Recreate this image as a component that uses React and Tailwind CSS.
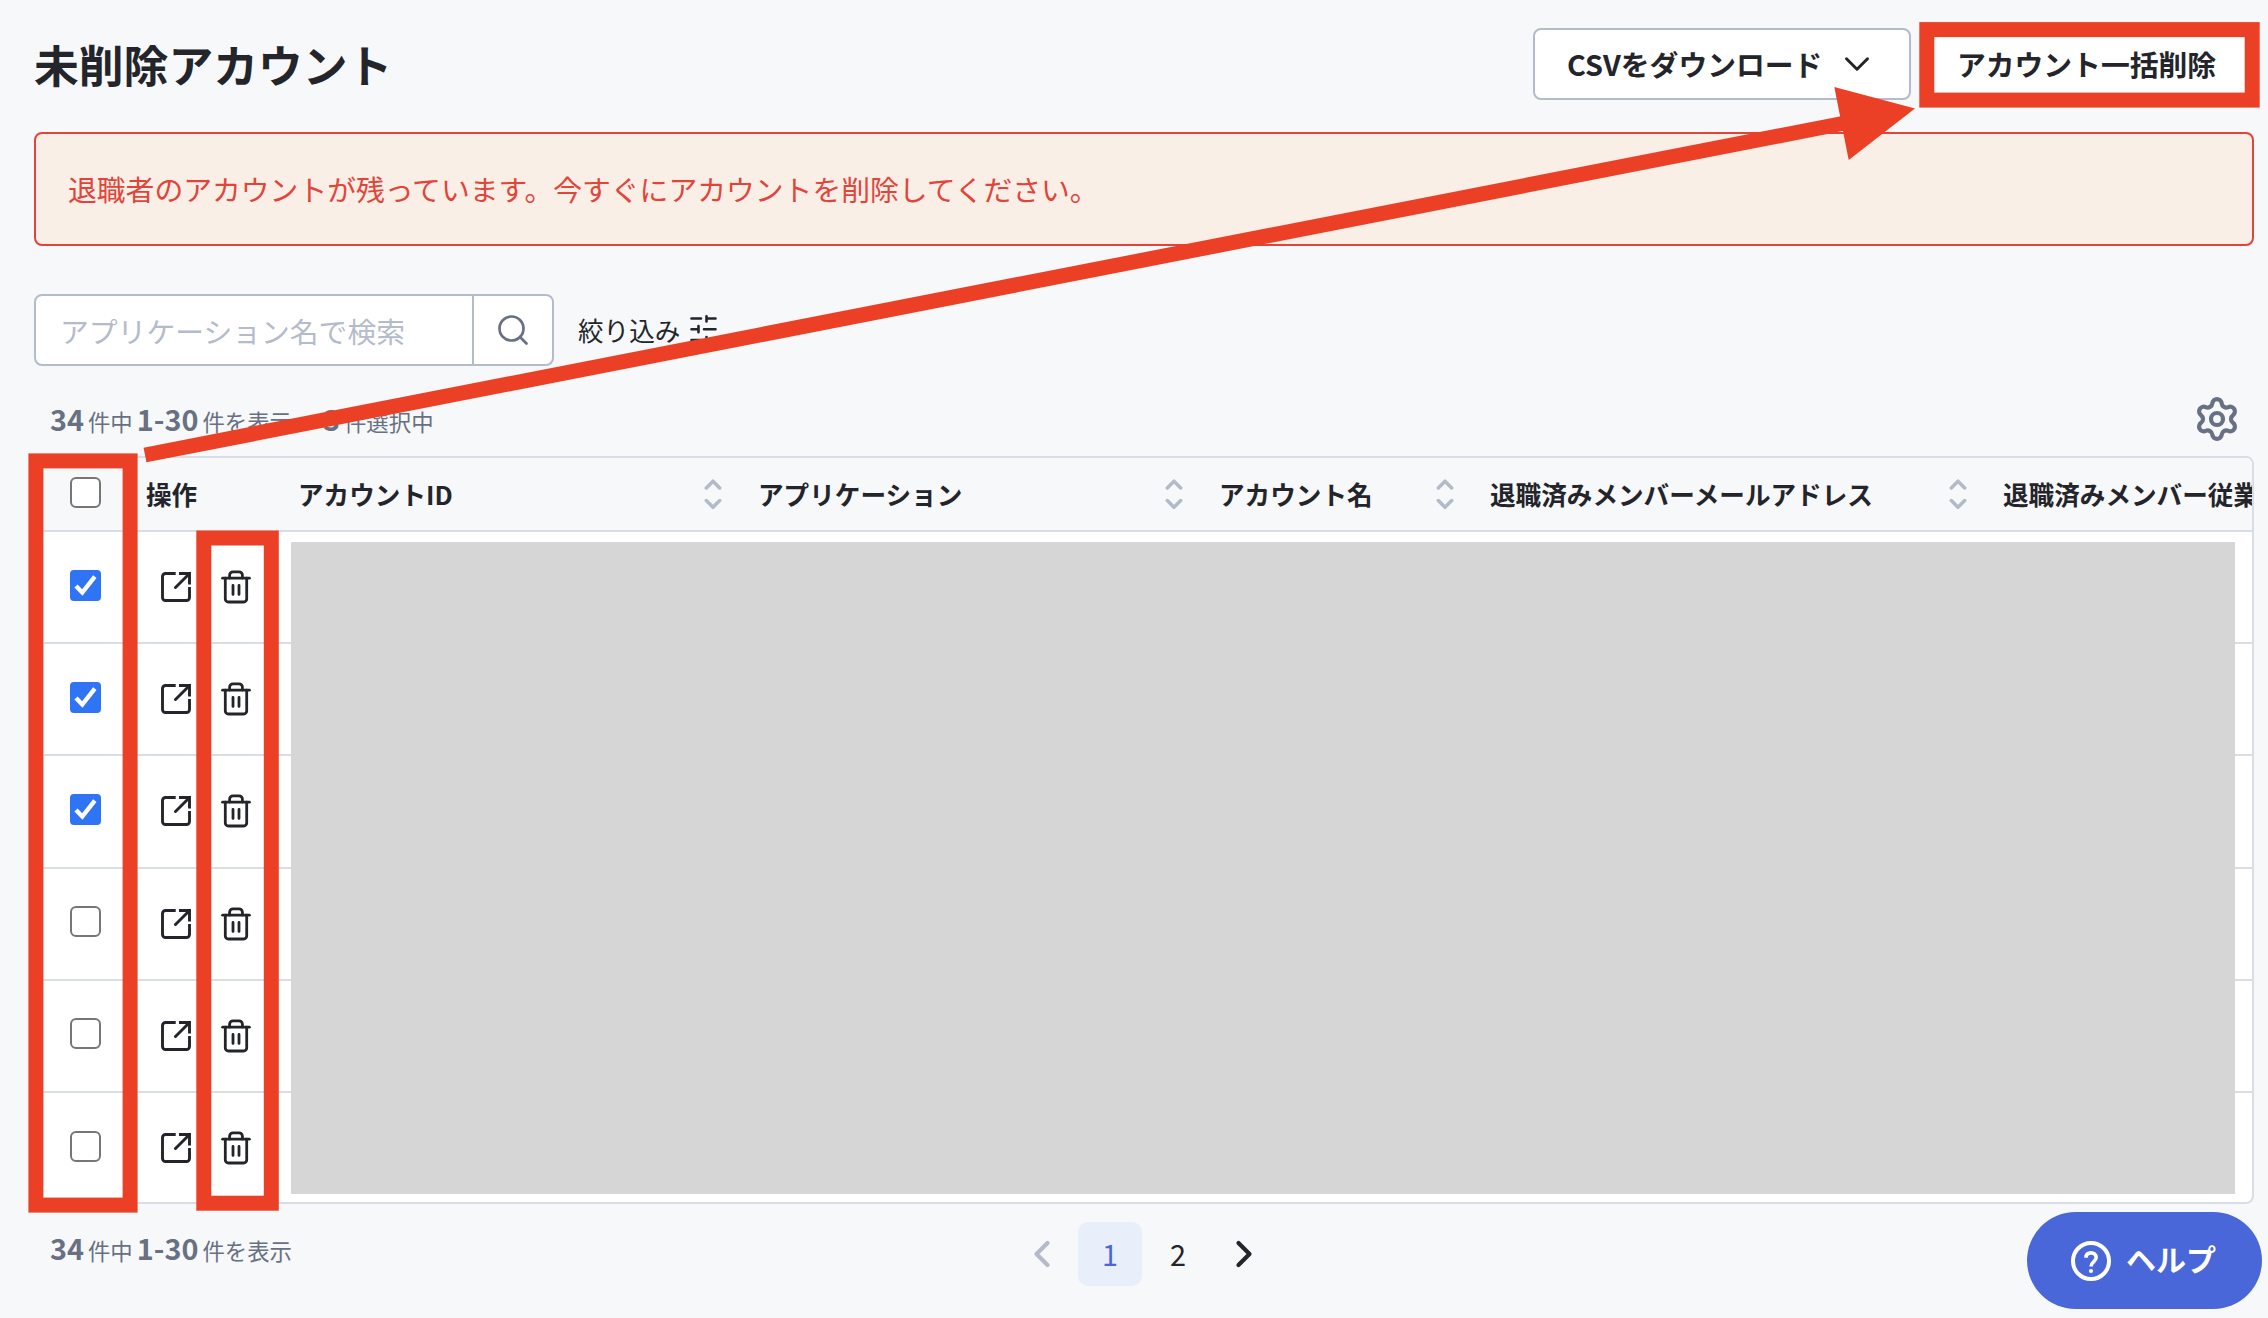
import React, { useState } from 'react';
import { Settings, Search, ChevronDown, ChevronLeft, ChevronRight } from 'lucide-react';

const columns = [
    { label: 'アカウントID', width: 'w-[460px]' },
    { label: 'アプリケーション', width: 'w-[461px]' },
    { label: 'アカウント名', width: 'w-[271px]' },
    { label: '退職済みメンバーメールアドレス', width: 'w-[513px]' },
    { label: '退職済みメンバー従業', width: 'w-[513px]' },
];

const TuneIcon = () => (
    <svg width="27" height="28" viewBox="0 0 27 28" fill="none" stroke="currentColor" strokeWidth="2.6" strokeLinecap="round">
        <path d="M1.5 3.5H11M16.5 3.5H25.5M16.5 1.3V6.5M1.5 14.2H8.5M8.5 11V17.2M14 14.2H25.5M1.5 25H11M16.5 25H25.5M16.5 22V27" />
    </svg>
);

const OpenIcon = () => (
    <svg width="30" height="30" viewBox="0 0 30 30" fill="none" stroke="currentColor" strokeWidth="2.9">
        <path d="M14.7 1.5H4.5A3 3 0 0 0 1.5 4.5V25.5A3 3 0 0 0 4.5 28.5H25.5A3 3 0 0 0 28.5 25.5V15" />
        <path d="M18 1.5H28.5V12.5" />
        <path d="M28.5 1.5L14.5 15.5" strokeLinecap="round" />
    </svg>
);

const TrashIcon = () => (
    <svg width="30" height="34" viewBox="0 0 30 34" fill="none" stroke="currentColor" strokeWidth="2.8" strokeLinecap="round" strokeLinejoin="round">
        <path d="M1.6 8.2H28.4" />
        <path d="M8.6 8V5.2A3.4 3.4 0 0 1 12 1.8H18A3.4 3.4 0 0 1 21.4 5.2V8" />
        <path d="M4.3 8.2V29A3 3 0 0 0 7.3 32H22.7A3 3 0 0 0 25.7 29V8.2" />
        <path d="M12 15.4V24.4M18 15.4V24.4" />
    </svg>
);

const SortIcon = () => (
    <svg width="18" height="32" viewBox="0 0 18 32" fill="none" stroke="#b3bac8" strokeWidth="3.5" strokeLinecap="round" strokeLinejoin="round">
        <path d="M2.3 10L9 3.2L15.7 10M2.3 22.5L9 29.3L15.7 22.5" />
    </svg>
);

const HelpIcon = () => (
    <svg width="40" height="40" viewBox="0 0 40 40" fill="none" stroke="currentColor" strokeWidth="4">
        <circle cx="20" cy="20" r="18" />
        <path d="M15 16.8C15 13.6 17 11.9 20 11.9S25.2 13.8 25.2 16.6C25.2 20.6 20 20.6 20 25.6" strokeWidth="3.6" />
        <circle cx="20" cy="30" r="2.1" fill="currentColor" stroke="none" />
    </svg>
);

const Checkbox = ({ checked, onChange }) => (
    <button
        type="button"
        role="checkbox"
        aria-checked={checked}
        onClick={onChange}
        className={
            checked
                ? 'block w-[31px] h-[31px] rounded-[4px] bg-[#3074f6]'
                : 'block w-[31px] h-[31px] rounded-[6px] bg-white border-2 border-[#767676]'
        }
    >
        {checked && (
            <svg width="31" height="31" viewBox="0 0 31 31" fill="none" stroke="white" strokeWidth="4.4">
                <path d="M6 16L12.3 22.5L24.8 6.6" />
            </svg>
        )}
    </button>
);

const Count = ({ selected }) => (
    <p className="flex items-baseline text-[22.4px] leading-[42px] text-[#687083]">
        <b className="text-[28.8px]">34</b>
        <span className="ml-1">件中</span>
        <b className="text-[28.8px] ml-1">1-30</b>
        <span className="ml-1">件を表示</span>
        {selected > 0 && (
            <>
                <b className="text-[28.8px] ml-[31px]">{selected}</b>
                <span className="ml-1">件選択中</span>
            </>
        )}
    </p>
);

export default function App() {
    const [rows, setRows] = useState([true, true, true, false, false, false]);
    const selected = rows.filter(Boolean).length;

    const toggle = (index) => {
        setRows(rows.map((row, i) => (i === index ? !row : row)));
    };

    return (
        <div className="relative w-[2268px] h-[1318px] overflow-hidden bg-[#f7f8fa] pl-[34px] pr-[14px] text-[#23252b] font-['Noto_Sans_CJK_JP',sans-serif]">
            {/* Title and actions */}
            <header className="flex items-start justify-between pt-7">
                <h1 className="text-[44.8px] leading-[72px] font-bold">未削除アカウント</h1>
                <div className="flex gap-[11px]">
                    <button className="flex items-center w-[378px] h-[72px] pl-8 rounded-lg border-2 border-[#b4bbcb] bg-white text-[28.8px] font-bold">
                        <span>CSVをダウンロード</span>
                        <ChevronDown className="w-[42px] h-[42px] ml-[14px]" strokeWidth={1.7} />
                    </button>
                    <button className="w-[332px] h-[72px] pr-[3px] rounded-lg border-2 border-[#b4bbcb] bg-white text-[28.8px] font-bold">
                        アカウント一括削除
                    </button>
                </div>
            </header>

            <div className="flex items-center h-[114px] mt-8 pl-8 rounded-lg border-2 border-[#e2443a] bg-[#faefe6] text-[28.8px] text-[#e2443a]">
                退職者のアカウントが残っています。今すぐにアカウントを削除してください。
            </div>

            {/* Search and filter */}
            <div className="flex items-center mt-12">
                <div className="flex w-[520px] h-[72px] rounded-lg border-2 border-[#b4bbcb] bg-white overflow-hidden">
                    <div className="flex items-center w-[438px] pl-6 pt-[2px] border-r-2 border-[#b4bbcb] text-[28.8px] text-[#b4bbcb]">アプリケーション名で検索</div>
                    <button className="flex flex-1 items-center justify-center text-[#687083]">
                        <Search className="w-9 h-9" strokeWidth={1.8} />
                    </button>
                </div>
                <button className="flex items-center ml-6 text-[25.6px]">
                    <span>絞り込み</span>
                    <span className="ml-[10px] pb-px"><TuneIcon /></span>
                </button>
            </div>

            <div className="flex items-center justify-between h-[90px] pl-4 pr-[13px]">
                <div className="pt-[18px]"><Count selected={selected} /></div>
                <Settings className="w-12 h-12 mt-4 text-[#687083]" strokeWidth={2.1} />
            </div>

            {/* Account table */}
            <div className="w-[2220px] h-[748px] rounded-lg border-2 border-[#d8dde6] bg-white overflow-hidden">
                <div className="flex items-center h-[74px] border-b-2 border-[#d8dde6] bg-[#f7f8fa] text-[25.6px] font-bold whitespace-nowrap">
                    <div className="w-[110px] shrink-0 pl-[33.5px] pb-1"><Checkbox checked={false} /></div>
                    <div className="w-[152px] shrink-0">操作</div>
                    {columns.map((col) => (
                        <div key={col.label} className={`${col.width} shrink-0 flex items-center justify-between pr-9`}>
                            <span>{col.label}</span>
                            <SortIcon />
                        </div>
                    ))}
                </div>
                {rows.map((checked, i) => (
                    <div key={i} className="flex items-center h-[112.2px] border-b-2 border-[#d8dde6]">
                        <div className="w-[125px] shrink-0 pl-[33.5px] pb-1"><Checkbox checked={checked} onChange={() => toggle(i)} /></div>
                        <button className="w-[60px] shrink-0"><OpenIcon /></button>
                        <button className="w-[34px] shrink-0"><TrashIcon /></button>
                    </div>
                ))}
            </div>

            <footer className="relative flex pl-4">
                <div className="pt-[23px]"><Count selected={0} /></div>
                <nav className="absolute left-[986px] top-[18px] flex items-center text-[28.8px]">
                    <ChevronLeft className="w-11 h-11 mr-[14px] text-[#b4bbc8]" strokeWidth={2.3} />
                    <button className="w-16 h-16 rounded-[10px] bg-[#e8eefa] text-[#4a67d9]">1</button>
                    <button className="w-[72px] h-16">2</button>
                    <ChevronRight className="w-11 h-11 ml-2" strokeWidth={2.3} />
                </nav>
            </footer>

            <button className="absolute left-[2027px] top-[1212px] flex items-center w-[235px] h-[97px] pl-11 rounded-full bg-[#4a67d9] text-white text-[30px] font-bold">
                <HelpIcon />
                <span className="ml-[15px] pb-1">ヘルプ</span>
            </button>

            {/* Masked cell contents */}
            <div className="absolute left-[290.7px] top-[541.5px] w-[1944px] h-[652px] bg-[#d6d6d6]" />

            {/* Annotations */}
            <svg className="absolute left-0 top-0 pointer-events-none" width="2268" height="1318" fill="none" stroke="#eb4026" strokeWidth="15">
                <rect x="35.9" y="460.9" width="94.2" height="744.2" />
                <rect x="203.8" y="538" width="67.5" height="665.2" />
                <rect x="1926.8" y="29.6" width="325.4" height="70.5" />
                <path d="M145 455L1845 123" />
                <path d="M1915 108.5L1834.3 87L1848.7 160Z" fill="#eb4026" stroke="none" />
            </svg>
        </div>
    );
}
